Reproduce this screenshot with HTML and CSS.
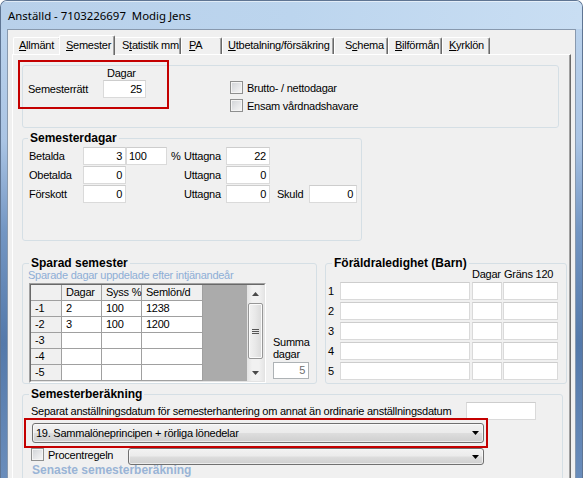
FILE: index.html
```html
<!DOCTYPE html>
<html lang="sv">
<head>
<meta charset="utf-8">
<title>Anställd</title>
<link rel="stylesheet" href="styles.css">
</head>
<body>
<div class="window">
  <div class="titlebar"><span class="title">Anställd - 7103226697  Modig Jens</span></div>
  <div class="frame">
    <div class="edge"></div>
    <div class="client">
      <div class="tabs">
        <div class="tab t1"><u>A</u>llmänt</div>
        <div class="tab t2 active"><u>S</u>emester</div>
        <div class="tab t3">S<u>t</u>atistik mm</div>
        <div class="tab t4"><u>P</u>A</div>
        <div class="tab t5"><u>U</u>tbetalning/försäkring</div>
        <div class="tab t6">S<u>c</u>hema</div>
        <div class="tab t7"><u>B</u>ilförmån</div>
        <div class="tab t8"><u>K</u>yrklön</div>
      </div>
      <div class="panel">
        <div class="redbox rb1"></div>

        <div class="group g1">
          <div class="g1-left">
            <span></span><span class="dagar-lbl">Dagar</span>
            <span class="lbl">Semesterrätt</span><div class="inp r">25</div>
          </div>
          <div class="checks">
            <div class="chk"><span class="box"></span><span>Brutto- / nettodagar</span></div>
            <div class="chk"><span class="box"></span><span>Ensam vårdnadshavare</span></div>
          </div>
        </div>

        <div class="group g2">
          <div class="gtitle">Semesterdagar</div>
          <div class="sd-grid">
            <span class="lbl">Betalda</span><div class="inp r">3</div><div class="inp l">100</div><span class="lbl pct">%</span><span class="lbl">Uttagna</span><div class="inp r">22</div><span></span><span></span>
            <span class="lbl">Obetalda</span><div class="inp r">0</div><span></span><span></span><span class="lbl">Uttagna</span><div class="inp r">0</div><span></span><span></span>
            <span class="lbl">Förskott</span><div class="inp r">0</div><span></span><span></span><span class="lbl">Uttagna</span><div class="inp r">0</div><span class="lbl skuld">Skuld</span><div class="inp r">0</div>
          </div>
        </div>

        <div class="grow">
          <div class="group g3">
            <div class="gtitle">Sparad semester</div>
            <div class="subtitle">Sparade dagar uppdelade efter intjänandeår</div>
            <div class="g3-body">
              <div class="dgv">
                <div class="dgv-in">
                  <div class="dgv-table">
                    <div class="hc"></div><div class="hc">Dagar</div><div class="hc">Syss %</div><div class="hc">Semlön/d</div>
                    <div class="rh">-1</div><div class="c">2</div><div class="c">100</div><div class="c">1238</div>
                    <div class="rh">-2</div><div class="c">3</div><div class="c">100</div><div class="c">1200</div>
                    <div class="rh">-3</div><div class="c"></div><div class="c"></div><div class="c"></div>
                    <div class="rh">-4</div><div class="c"></div><div class="c"></div><div class="c"></div>
                    <div class="rh">-5</div><div class="c"></div><div class="c"></div><div class="c"></div>
                  </div>
                  <div class="dgv-empty"></div>
                  <div class="vscroll">
                    <div class="sbtn"><svg width="7" height="4" viewBox="0 0 7 4"><polygon points="0,4 3.5,0 7,4" fill="#4a4a4a"/></svg></div>
                    <div class="thumb"><span class="grip"></span></div>
                    <div class="sbtn"><svg width="7" height="4" viewBox="0 0 7 4"><polygon points="0,0 7,0 3.5,4" fill="#4a4a4a"/></svg></div>
                  </div>
                </div>
              </div>
              <div class="summa">
                <span class="sl">Summa</span>
                <span class="sl">dagar</span>
                <div class="inp r dis">5</div>
              </div>
            </div>
          </div>

          <div class="group g4">
            <div class="gtitle">Föräldraledighet (Barn)</div>
            <div class="fl-grid">
              <span></span><span></span><span class="fh">Dagar</span><span class="fh g120">Gräns 120</span>
              <span class="num">1</span><div class="inp w1"></div><div class="inp w2"></div><div class="inp w3"></div>
              <span class="num">2</span><div class="inp w1"></div><div class="inp w2"></div><div class="inp w3"></div>
              <span class="num">3</span><div class="inp w1"></div><div class="inp w2"></div><div class="inp w3"></div>
              <span class="num">4</span><div class="inp w1"></div><div class="inp w2"></div><div class="inp w3"></div>
              <span class="num">5</span><div class="inp w1"></div><div class="inp w2"></div><div class="inp w3"></div>
            </div>
          </div>
        </div>

        <div class="group g5">
          <div class="redbox rb2"></div>
          <div class="gtitle">Semesterberäkning</div>
          <div class="sep-row">
            <span class="lbl sep-lbl">Separat anställningsdatum för semesterhantering om annat än ordinarie anställningsdatum</span>
            <div class="inp sep-inp"></div>
          </div>
          <div class="combo c1"><span class="ctext">19. Sammalöneprincipen + rörliga lönedelar</span><svg class="carr" width="7" height="4" viewBox="0 0 7 4"><polygon points="0,0 7,0 3.5,4" fill="#000"/></svg></div>
          <div class="proc-row">
            <div class="chk"><span class="box"></span><span>Procentregeln</span></div>
            <div class="combo c2"><span class="ctext"></span><svg class="carr" width="7" height="4" viewBox="0 0 7 4"><polygon points="0,0 7,0 3.5,4" fill="#000"/></svg></div>
          </div>
          <div class="senaste">Senaste semesterberäkning</div>
        </div>
      </div>
    </div>
    <div class="edge"></div>
  </div>
</div>
</body>
</html>
```

FILE: styles.css
```css
* { box-sizing: border-box; }
html, body { margin: 0; padding: 0; }
body {
  width: 583px; height: 478px; overflow: hidden; background: #fff;
  font-family: "Liberation Sans", Arial, sans-serif;
  font-size: 11px; letter-spacing: -0.25px; color: #000;
}
u { text-decoration: underline; text-underline-offset: 1px; }

.window {
  width: 583px; height: 478px;
  display: flex; flex-direction: column;
  border: 1px solid #5f7593; border-bottom: 0;
  border-radius: 7px 7px 0 0;
  overflow: hidden;
  background: #b9d1ea;
}
.titlebar {
  height: 28px; flex: none;
  display: flex; align-items: center;
  padding-left: 7px;
  background: linear-gradient(to right, #b8d0ea 0%, #bcd5ee 50%, #c9def3 100%);
  box-shadow: inset 0 1px rgba(255,255,255,0.55);
}
.title {
  font-family: "Noto Sans", "Liberation Sans", sans-serif;
  font-size: 11.4px; letter-spacing: 0; white-space: pre; color: #000;
}
.frame { flex: 1; display: flex; min-height: 0; }
.edge {
  width: 6px; flex: none;
  background: linear-gradient(to bottom, #bad2ec 0%, #aac4e4 25%, #7396c3 45%, #5479aa 70%, #6a8dbb 100%);
}
.client {
  flex: 1; min-width: 0;
  display: flex; flex-direction: column;
  border: 1px solid #8899ae; border-bottom: 0;
  background: #f0f0f0;
  padding: 5px 4px 0 4px;
}

/* tabs */
.tabs {
  height: 19px; flex: none;
  display: flex; align-items: flex-end;
  padding-left: 1px;
  position: relative; z-index: 2;
}
.tab {
  height: 17px; flex: none;
  background: #f0f0f0;
  border-top: 1px solid #fff; border-left: 1px solid #fff; border-right: 1px solid #696969;
  box-shadow: inset -1px 0 #a0a0a0;
  border-radius: 2px 2px 0 0;
  line-height: 15px; white-space: nowrap;
}
.tab.active {
  height: 20px; margin: 0 -2px -1px; padding-top: 2px;
  position: relative; z-index: 3;
}
.t1 { width: 48px; padding-left: 5px; }
.t2 { width: 56px; padding-left: 6px; }
.t3 { width: 68px; padding-left: 8px; }
.t4 { width: 41px; padding-left: 7px; }
.t5 { width: 112px; padding-left: 5px; }
.t6 { width: 54px; padding-left: 10px; }
.t7 { width: 54px; padding-left: 6px; }
.t8 { width: 48px; padding-left: 6px; }

.panel {
  flex: 1; position: relative;
  border: 1px solid; border-color: #fff #696969 #696969 #fff;
  box-shadow: inset -1px -1px #a0a0a0;
  padding: 10px 0 0 9px;
}

.redbox { position: absolute; border: 2px solid #c40000; z-index: 5; pointer-events: none; }
.rb1 { left: 5px; top: 5px; width: 151px; height: 49px; }
.rb2 { left: 1px; top: 23px; width: 464px; height: 30px; }

/* group boxes */
.group {
  border: 1px solid #d5dfe5; border-radius: 3px;
  position: relative; flex: none;
}
.gtitle {
  display: block; width: max-content;
  font-weight: bold; font-size: 12px; letter-spacing: 0;
  line-height: 14px; height: 14px;
  padding: 0 2px; margin-top: -8px;
  background: #f0f0f0;
}
.lbl { white-space: nowrap; align-self: center; line-height: 14px; }
.inp {
  height: 18px; background: #fff;
  border: 1px solid #dadada; border-top-color: #cdcdcd;
  line-height: 16px; padding: 0 3px; white-space: nowrap;
}
.r { text-align: right; }
.l { text-align: left; padding-left: 2px; }

.chk { display: flex; align-items: center; gap: 4px; height: 13px; white-space: nowrap; }
.box {
  width: 13px; height: 13px; flex: none;
  border: 1px solid #8e8f8f;
  background: linear-gradient(135deg, #cfd2d6 0%, #e6e7e9 55%, #f7f7f7 100%);
  box-shadow: inset 0 0 0 1px #f4f4f4;
}

/* group 1 */
.g1 { width: 537px; height: 63px; display: flex; }
.g1-left {
  display: grid; grid-template-columns: 75px 43px; grid-template-rows: 14px 18px;
  margin-left: 5px;
}
.dagar-lbl { padding-left: 4px; line-height: 14px; }
.checks { margin-left: 84px; padding-top: 15px; display: flex; flex-direction: column; gap: 5px; }

/* group 2 */
.g2 { width: 340px; height: 103px; margin-top: 10px; padding-left: 6px; }
.g2 .gtitle { margin-left: -1px; }
.sd-grid {
  display: grid;
  grid-template-columns: 54px 43px 41px 17px 42px 44px 39px 48px;
  grid-auto-rows: 18px; row-gap: 1px;
  margin-top: 2px;
}
.pct { padding-left: 4px; }
.skuld { padding-left: 7px; }

/* row with two groups */
.grow { display: flex; margin-top: 22px; }
.g3 { width: 295px; height: 121px; padding-left: 6px; }
.subtitle {
  color: #8eaed6; line-height: 14px; margin-top: -2px; margin-left: -1px; white-space: nowrap;
}
.g3-body { display: flex; margin-top: 1px; }
.dgv {
  width: 237px; height: 100px; flex: none;
  border: 1px solid; border-color: #a0a0a0 #fff #fff #a0a0a0;
}
.dgv-in {
  height: 100%; display: flex; overflow: hidden;
  border: 1px solid; border-color: #696969 #e3e3e3 #e3e3e3 #696969;
}
.dgv-table {
  flex: none; align-self: flex-start;
  display: grid;
  grid-template-columns: 30px 39px 39px 60px;
  grid-auto-rows: 15px; gap: 1px;
  padding: 0 1px 1px 0;
  background: #a0a0a0;
}
.hc, .rh { background: #f0f0f0; padding-left: 4px; line-height: 15px; white-space: nowrap; }
.c { background: #fff; padding-left: 4px; line-height: 15px; }
.dgv-empty { flex: 1; background: #ababab; }
.vscroll {
  width: 17px; flex: none;
  display: flex; flex-direction: column;
  background: linear-gradient(to right, #e3e3e3, #f1f1f1 30%, #f1f1f1 70%, #e6e6e6);
}
.sbtn { height: 17px; flex: none; display: flex; align-items: center; justify-content: center; }
.thumb {
  height: 56px; margin: 1px 1px 0 1px; flex: none;
  border: 1px solid #979797; border-radius: 2px;
  background: linear-gradient(to right, #f2f2f2, #e8e8e8 50%, #d9d9d9);
  box-shadow: inset 0 0 0 1px #fbfbfb;
  display: flex; align-items: center; justify-content: center;
}
.grip {
  width: 7px; height: 5px;
  background: linear-gradient(to bottom, #555 0 1px, transparent 1px 2px, #555 2px 3px, transparent 3px 4px, #555 4px 5px);
}
.vscroll .sbtn:last-child { margin-top: auto; }
.summa {
  margin-left: 7px; display: flex; flex-direction: column; justify-content: flex-end;
  padding-bottom: 4px;
}
.sl { line-height: 12px; }
.summa .inp { width: 36px; height: 17px; margin-top: 2px; }
.dis { border-color: #adb2b5; color: #6d6d6d; background: #fff; line-height: 15px; }

.g4 { width: 242px; height: 121px; margin-left: 8px; padding-left: 1px; }
.g4 .gtitle { margin-left: 5px; }
.fl-grid {
  display: grid;
  grid-template-columns: 13px 132px 31px 55px;
  grid-template-rows: 12px;
  grid-auto-rows: 18px; row-gap: 2px;
  margin-top: -2px;
}
.fh { line-height: 12px; white-space: nowrap; }
.g120 { padding-left: 1px; }
.num { line-height: 18px; padding-left: 1px; }
.w1 { width: 130px; }
.w2 { width: 30px; }
.w3 { width: 55px; }

/* group 5 */
.g5 { width: 541px; height: 100px; margin-top: 10px; padding-left: 8px; }
.g5 .gtitle { margin-left: -2px; }
.sep-row { display: flex; align-items: center; height: 18px; margin-top: 1px; }
.sep-lbl { width: 435px; }
.sep-inp { width: 70px; }
.combo {
  position: relative;
  display: flex; align-items: center;
  border: 1px solid #707070; border-radius: 3px;
  background: linear-gradient(to bottom, #f2f2f2 0%, #ebebeb 48%, #dddddd 52%, #cfcfcf 100%);
  box-shadow: inset 0 0 0 1px rgba(255,255,255,0.6);
  padding-left: 3px; white-space: nowrap;
}
.ctext { flex: 1; }
.carr { margin-right: 4px; flex: none; }
.c1 { width: 452px; height: 20px; margin-top: 3px; margin-left: 1px; }
.proc-row { display: flex; align-items: flex-start; margin-top: 5px; height: 17px; }
.proc-row .chk { width: 97px; }
.c2 { width: 356px; height: 17px; }
.c2 .carr { margin-top: 1px; }
.senaste {
  font-weight: bold; font-size: 12px; letter-spacing: 0;
  color: #99b4d6; line-height: 14px; margin-top: -2px; margin-left: 1px;
}
```
